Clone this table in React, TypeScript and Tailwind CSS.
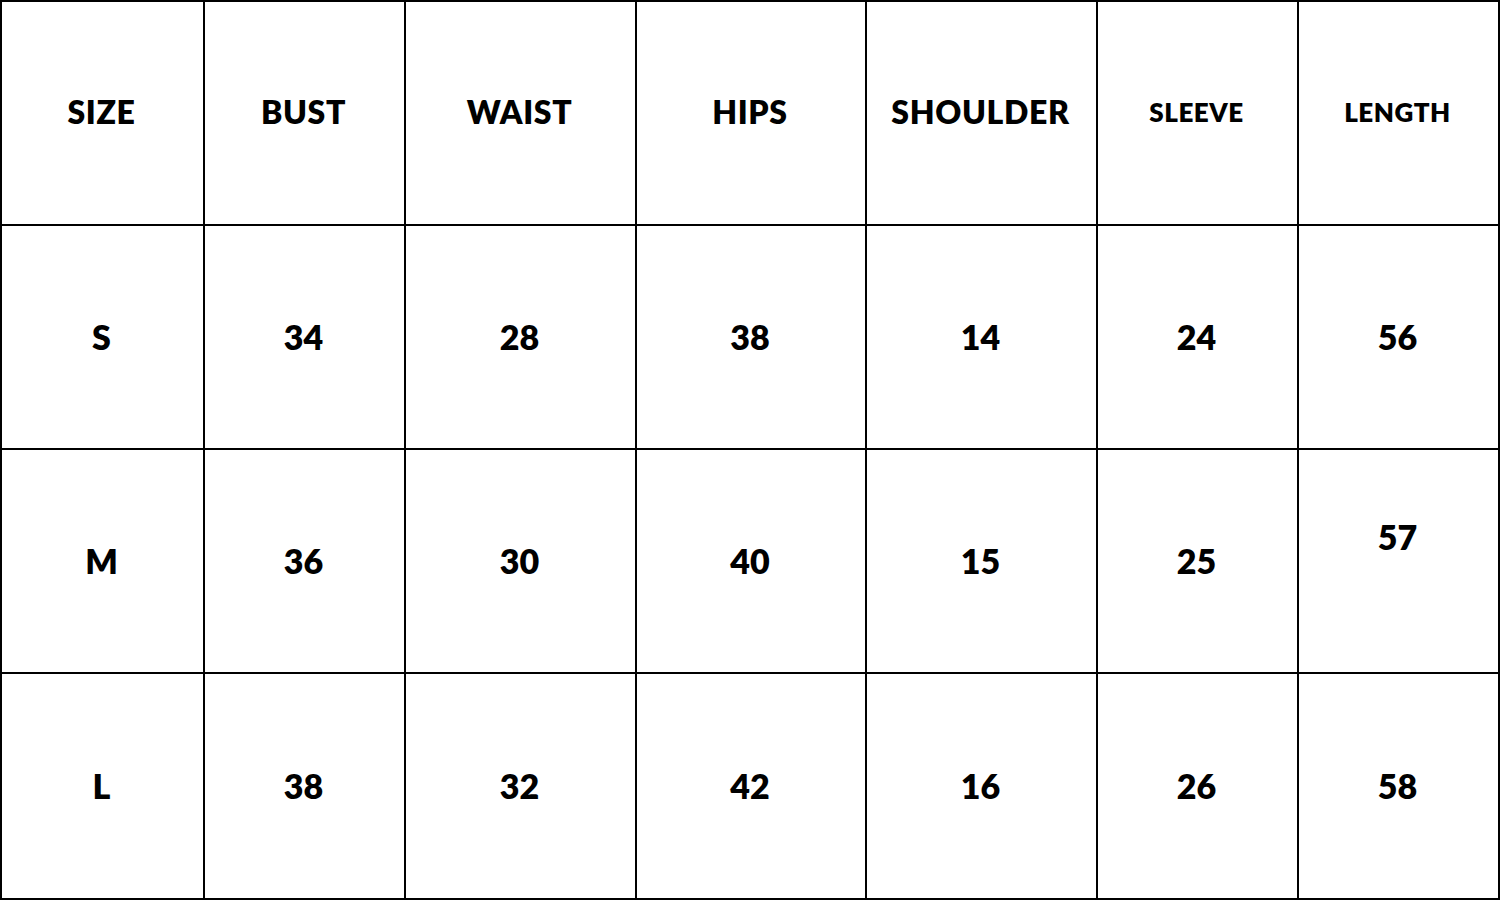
const headers = ["SIZE", "BUST", "WAIST", "HIPS", "SHOULDER", "SLEEVE", "LENGTH"];
const rows = [
  ["S", "34", "28", "38", "14", "24", "56"],
  ["M", "36", "30", "40", "15", "25", "57"],
  ["L", "38", "32", "42", "16", "26", "58"],
];

export default function App() {
  return (
    <div className="w-[1500px] h-[900px] bg-white text-black font-['Lato',sans-serif]">
      <div className="grid grid-cols-[203px_201px_231px_230px_231px_201px_1fr] grid-rows-[224px_224px_224px_224px] h-full border-2 border-black">
        {headers.map((h, i) => (
          <div
            key={h}
            className={`flex items-center justify-center pb-[2px] pr-[2px] border-b-2 border-black font-extrabold ${
              i < 6 ? "border-r-2" : ""
            } ${i >= 5 ? "text-[26px]" : "text-[32px]"} tracking-[0.02em]`}
          >
            {h}
          </div>
        ))}
        {rows.map((r, ri) =>
          r.map((v, i) => (
            <div
              key={ri + "-" + i}
              className={`flex items-center justify-center pr-[2px] border-black font-extrabold text-[34px] ${
                i < 6 ? "border-r-2" : ""
              } ${ri < 2 ? "border-b-2" : ""} ${ri === 1 && i === 6 ? "pb-[50px]" : "pb-[2px]"}`}
            >
              {v}
            </div>
          ))
        )}
      </div>
    </div>
  );
}
